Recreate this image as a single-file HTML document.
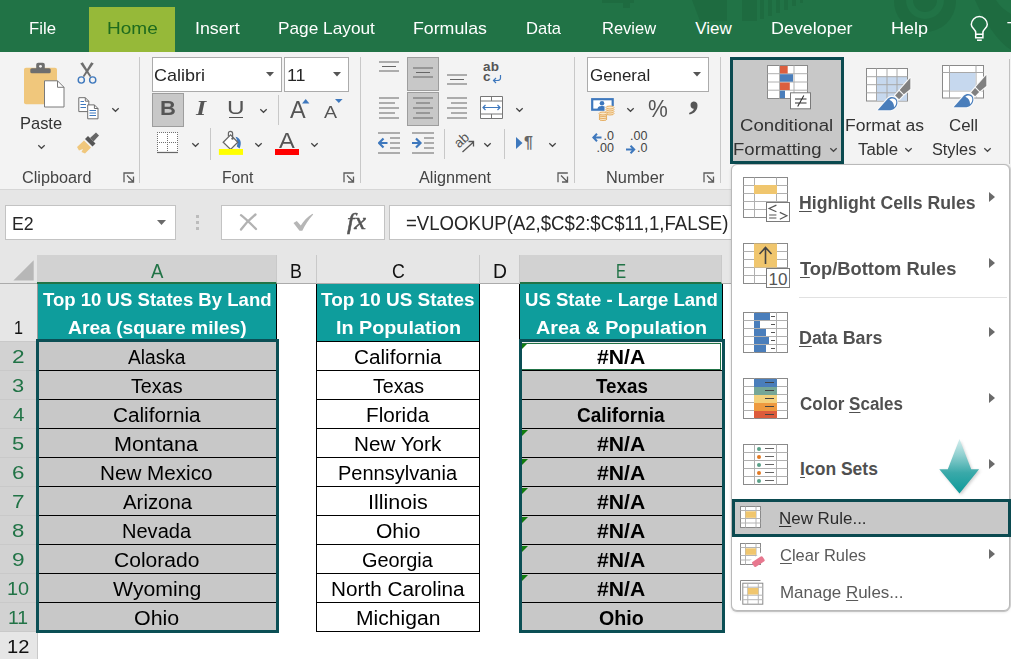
<!DOCTYPE html>
<html>
<head>
<meta charset="utf-8">
<title>Excel</title>
<style>
*{box-sizing:border-box;margin:0;padding:0}
html,body{width:1011px;height:659px;overflow:hidden;background:#fff}
body{font-family:"Liberation Sans",sans-serif;color:#262626;position:relative}
.a{position:absolute}
.t{position:absolute;white-space:nowrap;line-height:1}
.c{text-align:center}
#tabs{left:0;top:0;width:1011px;height:52px;background:#217346;overflow:hidden}
#home{left:89px;top:7px;width:86px;height:45px;background:#96b939}
#ribbon{left:0;top:52px;width:1011px;height:138px;background:#f3f3f3;border-bottom:1px solid #d6d6d6}
.vsep{position:absolute;width:1px;background:#c8c8c8}
.glabel{font-size:15.5px;color:#444}
.box{position:absolute;background:#fff;border:1px solid #ababab}
.selbtn{position:absolute;background:#c8c8c8;border:1px solid #9d9d9d}
#fbar{left:0;top:190px;width:1011px;height:65px;background:#e6e6e6}
#grid{left:0;top:255px;width:732px;height:404px;background:#fff;overflow:hidden}
.ch{position:absolute;top:0;height:29px;border-bottom:1px solid #ababab;background:#e6e6e6;font-size:20px;text-align:center;line-height:29px;color:#262626;border-right:1px solid #c9c9c9}
.ch.sel{background:#d2d2d2;color:#217346;border-bottom:2px solid #217346}
.rh{position:absolute;left:0;width:38px;height:29px;background:#e6e6e6;font-size:20px;text-align:center;line-height:30px;color:#262626;border-bottom:1px solid #c9c9c9;border-right:1px solid #c9c9c9}
.rh.sel{background:#d2d2d2;color:#217346;border-right:1px solid #b5b5b5}
.teal{position:absolute;background:#0e9d9c;color:#fff;font-weight:bold;font-size:18.5px;text-align:center;line-height:29px;white-space:nowrap}
.cell{position:absolute;height:30px;border:1px solid #000;font-size:19px;text-align:center;line-height:29px;white-space:nowrap;color:#000}
.g{background:#c8c8c8}
.b{font-weight:bold}
.selrng{position:absolute;border:3px solid #0b4f55}
.tri{position:absolute;width:0;height:0;border-top:6px solid #107c10;border-right:6px solid transparent}
#menu{left:731px;top:164px;width:279px;height:447px;background:#fff;border:1px solid #b9b9b9;border-radius:6px;box-shadow:0 1px 0 #c4c4c4,1px 0 0 #cfcfcf,0 1px 3px rgba(0,0,0,.15)}
.mi{font-size:17.5px;font-weight:bold;color:#444;left:800px}
.ms{font-size:18px;color:#555;left:780px}
.arr{position:absolute;width:0;height:0;border-left:6.5px solid #6a6a6a;border-top:5.5px solid transparent;border-bottom:5.5px solid transparent}
u{text-decoration-thickness:1px;text-underline-offset:2px}
</style>
</head>
<body>

<div id="tabs" class="a">
  <svg class="a" style="left:590px;top:0" width="421" height="52" viewBox="590 0 421 52"><g fill="#1e6b40">
<path d="M602 0H634V3H630V8H623V3H602Z"/><path d="M692 0H727V21H700Z"/><rect x="742" y="0" width="15" height="21"/>
<path d="M760 0H764V19H760ZM768 0H772V16H768ZM776 0H780V13H776ZM784 0H788V10H784ZM792 0H796V6H792ZM800 0H803V3H800Z"/>
<path d="M894 0A31 31 0 0 0 956 2V0H944A19 19 0 0 1 906 0Z"/><path d="M913 0A12 12 0 0 0 937 0Z"/>
<path d="M975 0C985 22 996 40 1011 50V14C1004 10 999 5 996 0Z"/></g>
<g stroke="#fff" stroke-width="1.5" fill="none"><path d="M975.7 34.3V32.5C975.7 29.5 971.3 28 971.3 24.6A8 8 0 0 1 987.3 24.6C987.3 28 982.9 29.5 982.9 32.5V34.3"/><path d="M975.7 34.3H982.9V37.7H975.7ZM977 40.2H981.8"/></g></svg>
  <div id="home" class="a"></div>
<div class="t" style="left:29.12px;top:20.21px;font-size:17px;color:#fff;transform:scaleX(0.9841);transform-origin:0 0;">File</div>
<div class="t" style="left:106.93px;top:20.21px;font-size:17px;color:#1e6b1e;transform:scaleX(1.1181);transform-origin:0 0;">Home</div>
<div class="t" style="left:194.52px;top:20.21px;font-size:17px;color:#fff;transform:scaleX(1.049);transform-origin:0 0;">Insert</div>
<div class="t" style="left:277.58px;top:20.21px;font-size:17px;color:#fff;transform:scaleX(1.0149);transform-origin:0 0;">Page Layout</div>
<div class="t" style="left:412.54px;top:20.21px;font-size:17px;color:#fff;transform:scaleX(1.0436);transform-origin:0 0;">Formulas</div>
<div class="t" style="left:525.63px;top:20.21px;font-size:17px;color:#fff;transform:scaleX(0.9769);transform-origin:0 0;">Data</div>
<div class="t" style="left:601.64px;top:20.21px;font-size:17px;color:#fff;transform:scaleX(0.9706);transform-origin:0 0;">Review</div>
<div class="t" style="left:695.2px;top:20.21px;font-size:17px;color:#fff;transform:scaleX(1);transform-origin:0 0;">View</div>
<div class="t" style="left:770.53px;top:20.21px;font-size:17px;color:#fff;transform:scaleX(1.0528);transform-origin:0 0;">Developer</div>
<div class="t" style="left:890.52px;top:20.21px;font-size:17px;color:#fff;transform:scaleX(1.0578);transform-origin:0 0;">Help</div>
<div class="t" style="left:1006.58px;top:19.71px;font-size:17px;color:#fff;transform:scaleX(1.0417);transform-origin:0 0;">T</div>
</div>
<div id="ribbon" class="a">
<div class="vsep" style="left:139px;top:5px;height:126px"></div>
<div class="vsep" style="left:360px;top:5px;height:126px"></div>
<div class="vsep" style="left:574px;top:5px;height:126px"></div>
<div class="vsep" style="left:720px;top:5px;height:126px"></div>
<svg class="a" style="left:23px;top:9px" width="44" height="50" viewBox="0 0 44 50">
<rect x="1" y="6.7" width="33" height="36.6" rx="2" fill="#f0c77c"/>
<path d="M13.2 8V3.8A2 2 0 0 1 15.2 1.8H19.8A2 2 0 0 1 21.8 3.8V8Z" fill="#6e6e6e"/><circle cx="17.5" cy="5.3" r="1.4" fill="#f3f3f3"/>
<rect x="7.3" y="7.2" width="20.4" height="5" rx="1.5" fill="#6e6e6e"/>
<path d="M21.5 19.8H34.5L41 26.3V46H21.5Z" fill="#fff" stroke="#7a7a7a"/>
<path d="M34.5 19.8V26.3H41" fill="none" stroke="#7a7a7a"/></svg>
<div class="t" style="left:19.64px;top:63.01px;font-size:17px;color:#333;transform:scaleX(0.9685);transform-origin:0 0;">Paste</div>
<svg class="a" style="left:36.5px;top:92px" width="9" height="6"><path d="M1.3 1.2L4.5 4.3L7.7 1.2" stroke="#444" stroke-width="1.2" fill="none"/></svg>
<svg class="a" style="left:76px;top:9px" width="22" height="24" viewBox="0 0 22 24">
<path d="M4.3 2.5L6.8 1.2L15.3 15.3L13.8 16Z" fill="#6e6e6e"/><path d="M17.7 2.5L15.2 1.2L6.7 15.3L8.2 16Z" fill="#6e6e6e"/>
<circle cx="5.3" cy="19" r="3.1" stroke="#3e78bd" stroke-width="1.4" fill="none"/><circle cx="16.7" cy="19" r="3.1" stroke="#3e78bd" stroke-width="1.4" fill="none"/></svg>
<svg class="a" style="left:77px;top:45px" width="23" height="24" viewBox="0 0 23 24">
<path d="M1.8 0.7H8.3L11.8 4.2V14.6H1.8Z" fill="#fff" stroke="#6e6e6e"/><path d="M8.3 0.7V4.2H11.8" fill="none" stroke="#6e6e6e"/>
<path d="M10.7 7.9H17.4L21 11.5V21.8H10.7Z" fill="#fff" stroke="#6e6e6e"/><path d="M17.4 7.9V11.5H21" fill="none" stroke="#6e6e6e"/>
<path d="M3.5 4.5H7M3.5 7.5H9M3.5 10.5H9M12.5 13.5H19M12.5 16H19M12.5 18.5H19" stroke="#3e78bd" stroke-width="1"/></svg>
<svg class="a" style="left:110.7px;top:54.8px" width="9" height="6"><path d="M1.3 1.2L4.5 4.3L7.7 1.2" stroke="#444" stroke-width="1.2" fill="none"/></svg>
<svg class="a" style="left:76px;top:79px" width="24" height="24" viewBox="0 0 24 24">
<path d="M14 7L20 1.5L23 4.5L17.5 10.5Z" fill="#666"/>
<path d="M9 8L12 5L19.5 12.5L16.5 15.5Z" fill="#555"/>
<path d="M8 9.5L15 16.5L9 22.5L5.5 21L7 18L3 19.5L1 16Z" fill="#f0c77c"/></svg>
<div class="t" style="left:21.58px;top:118.13px;font-size:15.8px;color:#444;transform:scaleX(1.0274);transform-origin:0 0;">Clipboard</div>
<svg class="a" style="left:122.5px;top:119.5px" width="12" height="12"><path d="M1 10.3V1H10.8M4 3.5L10.3 9.8M10.5 4.5V10H5" stroke="#5e5e5e" stroke-width="1.3" fill="none"/></svg>
<div class="box" style="left:152px;top:5px;width:130px;height:35px"></div>
<div class="t" style="left:154.15px;top:15.21px;font-size:17px;color:#262626;transform:scaleX(1.0586);transform-origin:0 0;">Calibri</div>
<svg class="a" style="left:266px;top:20px" width="8" height="5"><path d="M0 0H8L4 4.5Z" fill="#555"/></svg>
<div class="box" style="left:284px;top:5px;width:65px;height:35px"></div>
<div class="t" style="left:287.33px;top:15.21px;font-size:17px;color:#262626;transform:scaleX(1.0516);transform-origin:0 0;">11</div>
<svg class="a" style="left:333px;top:20px" width="8" height="5"><path d="M0 0H8L4 4.5Z" fill="#555"/></svg>
<div class="selbtn" style="left:152px;top:41px;width:32px;height:34px"></div>
<div class="t" style="left:160.17px;top:46.47px;font-size:20px;color:#555;font-weight:bold;transform:scaleX(1.0984);transform-origin:0 0;">B</div>
<div class="t" style="left:195.85px;top:45.81px;font-size:21px;color:#555;font-family:'Liberation Serif',serif;font-weight:bold;font-style:italic;transform:scaleX(1.2444);transform-origin:0 0;">I</div>
<div class="t" style="left:226.76px;top:46.64px;font-size:18.5px;color:#555;transform:scaleX(1.3143);transform-origin:0 0;">U</div>
<div class="a" style="left:228.5px;top:64.8px;width:14px;height:1.4px;background:#555"></div>
<svg class="a" style="left:258.7px;top:56px" width="9" height="6"><path d="M1.3 1.2L4.5 4.3L7.7 1.2" stroke="#444" stroke-width="1.2" fill="none"/></svg>
<div class="vsep" style="left:278px;top:43px;height:30px"></div>
<div class="t" style="left:289.5px;top:47.33px;font-size:23px;color:#555;transform:scaleX(1.0197);transform-origin:0 0;">A</div>
<svg class="a" style="left:301.8px;top:47px" width="8" height="5"><path d="M0 4.5H7.4L3.7 0Z" fill="#3e78bd"/></svg>
<div class="t" style="left:324px;top:52.41px;font-size:17px;color:#555;transform:scaleX(1.1504);transform-origin:0 0;">A</div>
<svg class="a" style="left:335.4px;top:47px" width="8" height="5"><path d="M0 0H7.6L3.8 4Z" fill="#3e78bd"/></svg>
<svg class="a" style="left:157px;top:80px" width="22" height="22" viewBox="0 0 22 22">
<rect x="0.5" y="0.5" width="20.5" height="19" fill="#fff"/>
<path d="M0 0.5H21M0 10.5H21" stroke="#707070" stroke-width="1" stroke-dasharray="1 1" fill="none"/>
<path d="M0.5 0V20M10.5 0V20M20.5 0V20" stroke="#707070" stroke-width="1" stroke-dasharray="1 1" fill="none"/>
<path d="M0 20.5H21" stroke="#666" stroke-width="1.2"/></svg>
<svg class="a" style="left:190.5px;top:89.5px" width="9" height="6"><path d="M1.3 1.2L4.5 4.3L7.7 1.2" stroke="#444" stroke-width="1.2" fill="none"/></svg>
<div class="vsep" style="left:210px;top:76px;height:32px"></div>
<svg class="a" style="left:218px;top:78px" width="26" height="26" viewBox="0 0 26 26">
<path d="M17.5 6.8C22.5 8 24.2 12.5 21.6 18.6L18.8 16.5C20 13 19.5 10 17.5 6.8Z" fill="#3e78bd"/>
<path d="M12.6 4.9L19.8 12.3L12.6 19.4L5.2 12.3Z" fill="#fff" stroke="#666" stroke-width="1.3"/>
<path d="M10.4 6.5V3.4A2.1 2.1 0 0 1 14.6 3.4V8.4" stroke="#666" stroke-width="1.2" fill="none"/><circle cx="14.5" cy="8.6" r="1.2" fill="#666"/>
<rect x="0.9" y="19" width="24.1" height="5.9" fill="#ff0"/></svg>
<svg class="a" style="left:253.5px;top:89.5px" width="9" height="6"><path d="M1.3 1.2L4.5 4.3L7.7 1.2" stroke="#444" stroke-width="1.2" fill="none"/></svg>
<div class="t" style="left:278.99px;top:78.6px;font-size:21.5px;color:#555;transform:scaleX(1.0986);transform-origin:0 0;">A</div>
<div class="a" style="left:275px;top:97.30000000000001px;width:24px;height:5.5px;background:#f00"></div>
<svg class="a" style="left:309.5px;top:89.5px" width="9" height="6"><path d="M1.3 1.2L4.5 4.3L7.7 1.2" stroke="#444" stroke-width="1.2" fill="none"/></svg>
<div class="t" style="left:221.51px;top:118.03px;font-size:15.8px;color:#444;transform:scaleX(0.9934);transform-origin:0 0;">Font</div>
<svg class="a" style="left:343.2px;top:119.5px" width="12" height="12"><path d="M1 10.3V1H10.8M4 3.5L10.3 9.8M10.5 4.5V10H5" stroke="#5e5e5e" stroke-width="1.3" fill="none"/></svg>
<div class="selbtn" style="left:407px;top:5px;width:32px;height:34px"></div>
<div class="selbtn" style="left:407px;top:40px;width:32px;height:34px"></div>
<svg class="a" style="left:379px;top:9px" width="20" height="11"><path d="M0 1H20 M3 5.5H17 M0 10H20" stroke="#666" stroke-width="1.2" fill="none"/></svg>
<svg class="a" style="left:413px;top:15px" width="20" height="11"><path d="M0 1H20 M3 5.5H17 M0 10H20" stroke="#666" stroke-width="1.2" fill="none"/></svg>
<svg class="a" style="left:447px;top:21.5px" width="20" height="11"><path d="M0 1H20 M3 5.5H17 M0 10H20" stroke="#666" stroke-width="1.2" fill="none"/></svg>
<div class="t" style="left:483px;top:10px;font-size:13.5px;font-weight:bold;color:#555;line-height:10px;letter-spacing:0.2px">ab<br>c</div>
<svg class="a" style="left:492px;top:22px" width="10" height="10"><path d="M8.5 1V4C8.5 6 7 6.5 5 6.5H1.5M4 4L1.5 6.5L4 9" stroke="#3e78bd" stroke-width="1.2" fill="none"/></svg>
<svg class="a" style="left:379px;top:44.5px" width="20" height="22"><path d="M0 1H20 M0 6H16 M0 11H20 M0 16H16 M0 21H20" stroke="#666" stroke-width="1.2" fill="none"/></svg>
<svg class="a" style="left:413px;top:44.5px" width="20" height="22"><path d="M0 1H20 M3 6H17 M0 11H20 M3 16H17 M0 21H20" stroke="#666" stroke-width="1.2" fill="none"/></svg>
<svg class="a" style="left:447px;top:44.5px" width="20" height="22"><path d="M0 1H20 M4 6H20 M0 11H20 M4 16H20 M0 21H20" stroke="#666" stroke-width="1.2" fill="none"/></svg>
<svg class="a" style="left:480px;top:44px" width="24" height="24" viewBox="0 0 24 24">
<path d="M0.5 0.5H22.5V22.5H0.5ZM0.5 5H22.5M0.5 18H22.5M11.5 0.5V5M11.5 18V22.5" stroke="#777" fill="#fff"/>
<path d="M3 11.5H20M5.5 9L3 11.5L5.5 14M17.5 9L20 11.5L17.5 14" stroke="#3e78bd" stroke-width="1.2" fill="none"/></svg>
<svg class="a" style="left:515px;top:55px" width="9" height="6"><path d="M1.3 1.2L4.5 4.3L7.7 1.2" stroke="#444" stroke-width="1.2" fill="none"/></svg>
<svg class="a" style="left:378px;top:79.5px" width="24" height="24" viewBox="0 0 24 24"><path d="M0 1H22M12 6H22M12 11H22M12 16H22M0 21H22" stroke="#666" stroke-width="1.2"/>
<path d="M9.5 11H1.5M5.5 6.5L1 11L5.5 15.5" stroke="#3e78bd" stroke-width="2.2" fill="none"/></svg>
<svg class="a" style="left:412px;top:79.5px" width="24" height="24" viewBox="0 0 24 24"><path d="M0 1H22M12 6H22M12 11H22M12 16H22M0 21H22" stroke="#666" stroke-width="1.2"/>
<path d="M0 11H8M4 6.5L8.5 11L4 15.5" stroke="#3e78bd" stroke-width="2.2" fill="none"/></svg>
<div class="vsep" style="left:444px;top:77px;height:30px"></div>
<svg class="a" style="left:451px;top:78px" width="28" height="28" viewBox="0 0 28 28">
<text x="0" y="0" font-family="Liberation Sans" font-size="13.5" fill="#555" text-anchor="middle" transform="translate(13.5,13.5) rotate(-42)">ab</text>
<path d="M11.5 22L22.5 12M17.5 11.5H22.5V16.5" stroke="#555" stroke-width="1.3" fill="none"/></svg>
<svg class="a" style="left:483px;top:90px" width="9" height="6"><path d="M1.3 1.2L4.5 4.3L7.7 1.2" stroke="#444" stroke-width="1.2" fill="none"/></svg>
<div class="vsep" style="left:504px;top:77px;height:30px"></div>
<svg class="a" style="left:516px;top:85px" width="7" height="12"><path d="M0 0L6.5 6L0 12Z" fill="#3e78bd"/></svg>
<div class="t" style="left:524px;top:83px;font-size:16px;font-weight:bold;color:#666">&para;</div>
<svg class="a" style="left:548px;top:90px" width="9" height="6"><path d="M1.3 1.2L4.5 4.3L7.7 1.2" stroke="#444" stroke-width="1.2" fill="none"/></svg>
<div class="t" style="left:419.1px;top:118.03px;font-size:15.8px;color:#444;transform:scaleX(1.0256);transform-origin:0 0;">Alignment</div>
<svg class="a" style="left:557px;top:119.5px" width="12" height="12"><path d="M1 10.3V1H10.8M4 3.5L10.3 9.8M10.5 4.5V10H5" stroke="#5e5e5e" stroke-width="1.3" fill="none"/></svg>
<div class="box" style="left:587px;top:5px;width:122px;height:35px"></div>
<div class="t" style="left:589.6px;top:15.11px;font-size:17px;color:#262626;transform:scaleX(0.9949);transform-origin:0 0;">General</div>
<svg class="a" style="left:693px;top:20px" width="8" height="5"><path d="M0 0H8L4 4.5Z" fill="#555"/></svg>
<svg class="a" style="left:590px;top:45px" width="26" height="26" viewBox="0 0 26 26">
<rect x="2.2" y="2.2" width="20.5" height="10.5" fill="#fff" stroke="#3e78bd" stroke-width="2.2"/>
<circle cx="12" cy="6.2" r="2.3" fill="#3e78bd"/>
<path d="M7.5 12.5C7.5 9.5 9.5 9 12 9C14.5 9 16.5 9.5 16.5 12.5Z" fill="#3e78bd"/>
<rect x="14.5" y="9" width="10.5" height="9" fill="#f3f3f3"/><rect x="8" y="15" width="10" height="9" fill="#f3f3f3"/>
<ellipse cx="20" cy="16.5" rx="4" ry="1.5" fill="#fbe9cc" stroke="#e5ae62" stroke-width="1"/><ellipse cx="20" cy="14.5" rx="4" ry="1.5" fill="#fbe9cc" stroke="#e5ae62" stroke-width="1"/><ellipse cx="20" cy="12.5" rx="4" ry="1.5" fill="#fbe9cc" stroke="#e5ae62" stroke-width="1"/><ellipse cx="20" cy="10.5" rx="4" ry="1.5" fill="#fbe9cc" stroke="#e5ae62" stroke-width="1"/>
<ellipse cx="13" cy="22" rx="4" ry="1.5" fill="#fbe9cc" stroke="#e5ae62" stroke-width="1"/><ellipse cx="13" cy="20" rx="4" ry="1.5" fill="#fbe9cc" stroke="#e5ae62" stroke-width="1"/><ellipse cx="13" cy="18" rx="4" ry="1.5" fill="#fbe9cc" stroke="#e5ae62" stroke-width="1"/><ellipse cx="13" cy="16.5" rx="4" ry="1.5" fill="#fbe9cc" stroke="#e5ae62" stroke-width="1"/></svg>
<svg class="a" style="left:626px;top:55px" width="9" height="6"><path d="M1.3 1.2L4.5 4.3L7.7 1.2" stroke="#444" stroke-width="1.2" fill="none"/></svg>
<div class="t" style="left:648px;top:45px;font-size:24px;color:#555;transform:scaleX(.93);transform-origin:0 0">%</div>
<svg class="a" style="left:687px;top:48px" width="13" height="17"><path d="M6.5 1.5A3.8 3.8 0 0 1 10.5 5.5C10.5 10 7.5 13.5 2.5 14.5L2 13C5 12 6.5 10.5 6.8 8.8A3.7 3.7 0 0 1 6.5 1.5Z" fill="#555"/></svg>
<div class="t" style="left:603px;top:79px;font-size:12.5px;color:#444;line-height:11.5px;text-align:right;width:11px;direction:rtl"><span style="direction:ltr;unicode-bidi:bidi-override">.0</span><br><span style="direction:ltr;unicode-bidi:bidi-override">.00</span></div>
<svg class="a" style="left:592px;top:81px" width="10" height="9"><path d="M9.5 4.5H1.5M5 0.8L1.3 4.5L5 8.2" stroke="#3e78bd" stroke-width="2" fill="none"/></svg>
<div class="t" style="left:629px;top:79px;font-size:12.5px;color:#444;line-height:11.5px;text-align:right;width:18.5px;direction:rtl"><span style="direction:ltr;unicode-bidi:bidi-override">.00</span><br><span style="direction:ltr;unicode-bidi:bidi-override">.0</span></div>
<svg class="a" style="left:626px;top:92.5px" width="10" height="9"><path d="M0 4.5H8M4.5 0.8L8.2 4.5L4.5 8.2" stroke="#3e78bd" stroke-width="2" fill="none"/></svg>
<div class="t" style="left:605.65px;top:118.03px;font-size:15.8px;color:#444;transform:scaleX(1.0366);transform-origin:0 0;">Number</div>
<svg class="a" style="left:703px;top:119.5px" width="12" height="12"><path d="M1 10.3V1H10.8M4 3.5L10.3 9.8M10.5 4.5V10H5" stroke="#5e5e5e" stroke-width="1.3" fill="none"/></svg>
<div class="a" style="left:730px;top:5px;width:114px;height:107px;background:#c8c8c8;border:3px solid #0b4a50"></div>
<svg class="a" style="left:767px;top:12.5px" width="46" height="46" viewBox="0 0 46 46">
<rect x="0.5" y="0.5" width="40" height="33" fill="#fff" stroke="#8a8a8a"/>
<path d="M12.5 0.5V33.5M27 0.5V33.5M0.5 8.7H40.5M0.5 17H40.5M0.5 25.2H40.5" stroke="#b0b0b0" fill="none"/>
<rect x="13" y="1" width="7.7" height="7.5" fill="#dc5f3f"/><rect x="13" y="9.2" width="13" height="7.5" fill="#4a7ebb"/><rect x="13" y="17.5" width="9.8" height="7.5" fill="#dc5f3f"/><rect x="13" y="25.7" width="5" height="7.5" fill="#4a7ebb"/>
<rect x="23.5" y="27.8" width="20" height="16" fill="#fff" stroke="#7a7a7a"/>
<path d="M28 34H39.5M28 38H39.5M36.8 30.5L30.7 41.5" stroke="#333" stroke-width="1.1" fill="none"/></svg>
<div class="t" style="left:740.03px;top:64.96px;font-size:17.3px;color:#333;transform:scaleX(1.0769);transform-origin:0 0;">Conditional</div>
<div class="t" style="left:733.3px;top:89.16px;font-size:17.3px;color:#333;transform:scaleX(1.0723);transform-origin:0 0;">Formatting</div>
<svg class="a" style="left:828.5px;top:94.5px" width="9" height="6"><path d="M1.3 1.2L4.5 4.3L7.7 1.2" stroke="#444" stroke-width="1.2" fill="none"/></svg>
<svg class="a" style="left:865.5px;top:15.5px" width="48" height="46" viewBox="0 0 48 46">
<rect x="0.5" y="0.5" width="41" height="32.5" fill="#fff" stroke="#8a8a8a"/>
<rect x="10.5" y="8.7" width="30.5" height="24" fill="#c6d8ee"/>
<path d="M10.5 0.5V33M21 0.5V33M31 0.5V33M0.5 8.7H41.5M0.5 16.7H41.5M0.5 24.8H41.5" stroke="#a8a8a8" fill="none"/>
<g stroke="#fafafa" stroke-width="2.2" stroke-linejoin="round"><path d="M44.3 10V20.9L37.9 26.3L33.7 22.1Z"/><path d="M33.1 23.1L37.1 26.9L33.1 31.3L29.1 27.6Z"/><path d="M11.6 42.2L22 30.5C24.5 28 29.5 28.5 31 32C32.5 36.5 29.5 41.5 24.5 42.2Z"/></g>
<path d="M44.3 10V20.9L37.9 26.3L33.7 22.1Z" fill="#808080"/>
<path d="M33.1 23.1L37.1 26.9L33.1 31.3L29.1 27.6Z" fill="#808080"/>
<path d="M11.6 42.2L22 30.5C24.5 28 29.5 28.5 31 32C32.5 36.5 29.5 41.5 24.5 42.2Z" fill="#4a7ebb"/>
<path d="M23.3 31.8C25.5 29.6 29.6 30 30.2 33.3C30.6 35.8 29.6 38 28 39.3C28.3 36 26.6 33.3 23.3 31.8Z" fill="#fff"/></svg>
<div class="t" style="left:845.38px;top:65.06px;font-size:17.3px;color:#333;transform:scaleX(1.0158);transform-origin:0 0;">Format as</div>
<div class="t" style="left:857.51px;top:89.16px;font-size:17.3px;color:#333;transform:scaleX(0.9726);transform-origin:0 0;">Table</div>
<svg class="a" style="left:903.7px;top:94.5px" width="9" height="6"><path d="M1.3 1.2L4.5 4.3L7.7 1.2" stroke="#444" stroke-width="1.2" fill="none"/></svg>
<svg class="a" style="left:941.7px;top:12.5px" width="48" height="46" viewBox="0 0 48 46">
<rect x="0.5" y="0.5" width="41" height="32.5" fill="#fff" stroke="#8a8a8a"/>
<path d="M7.5 0.5V33M34 0.5V33M0.5 7.5H41.5M0.5 26H41.5" stroke="#a8a8a8" fill="none"/>
<rect x="8" y="8" width="25.5" height="17.5" fill="#c6d8ee"/>
<g stroke="#fafafa" stroke-width="2.2" stroke-linejoin="round"><path d="M44.3 10V20.9L37.9 26.3L33.7 22.1Z"/><path d="M33.1 23.1L37.1 26.9L33.1 31.3L29.1 27.6Z"/><path d="M11.6 42.2L22 30.5C24.5 28 29.5 28.5 31 32C32.5 36.5 29.5 41.5 24.5 42.2Z"/></g>
<path d="M44.3 10V20.9L37.9 26.3L33.7 22.1Z" fill="#808080"/>
<path d="M33.1 23.1L37.1 26.9L33.1 31.3L29.1 27.6Z" fill="#808080"/>
<path d="M11.6 42.2L22 30.5C24.5 28 29.5 28.5 31 32C32.5 36.5 29.5 41.5 24.5 42.2Z" fill="#4a7ebb"/>
<path d="M23.3 31.8C25.5 29.6 29.6 30 30.2 33.3C30.6 35.8 29.6 38 28 39.3C28.3 36 26.6 33.3 23.3 31.8Z" fill="#fff"/></svg>
<div class="t" style="left:948.52px;top:65.06px;font-size:17.3px;color:#333;transform:scaleX(0.9784);transform-origin:0 0;">Cell</div>
<div class="t" style="left:931.95px;top:89.16px;font-size:17.3px;color:#333;transform:scaleX(0.9409);transform-origin:0 0;">Styles</div>
<svg class="a" style="left:983.3px;top:94.5px" width="9" height="6"><path d="M1.3 1.2L4.5 4.3L7.7 1.2" stroke="#444" stroke-width="1.2" fill="none"/></svg>
<div class="vsep" style="left:1009px;top:7px;height:105px;background:#c0c0c0"></div>
</div>
<div id="fbar" class="a">
<div class="box" style="left:5px;top:15px;width:171px;height:35px;border-color:#c3c3c3"></div>
<div class="t" style="left:12.3px;top:23.82px;font-size:19px;color:#262626;transform:scaleX(0.9327);transform-origin:0 0;">E2</div>
<svg class="a" style="left:156.5px;top:30px" width="10" height="6"><path d="M0 0H9L4.5 5Z" fill="#6a6a6a"/></svg>
<div class="a" style="left:196px;top:25px;width:3px;height:3px;background:#bcbcbc"></div>
<div class="a" style="left:196px;top:31px;width:3px;height:3px;background:#bcbcbc"></div>
<div class="a" style="left:196px;top:37px;width:3px;height:3px;background:#bcbcbc"></div>
<div class="box" style="left:221px;top:15px;width:164px;height:35px;border-color:#c3c3c3"></div>
<svg class="a" style="left:239px;top:23px" width="20" height="18"><path d="M2 2.2C7 6 12 11 17 16M16.5 1.5C11 6 6 11 2 16.5" stroke="#b2b2b2" stroke-width="2.3" stroke-linecap="round" fill="none"/></svg>
<svg class="a" style="left:292px;top:23px" width="23" height="19"><path d="M1.5 10L4.8 8L8.8 12.5C11.5 8 15.5 3.8 20.5 0.8L21.2 1.6C16.8 6.5 13 12 10.3 17.8H7.5Z" fill="#b6b6b6"/></svg>
<div class="t" style="left:346.77px;top:19.2px;font-size:24px;color:#555;font-family:'Liberation Serif',serif;font-style:italic;transform:scaleX(1.1006);transform-origin:0 0;-webkit-text-stroke:0.5px #555;">fx</div>
<div class="box" style="left:389px;top:15px;width:346px;height:35px;border-color:#c3c3c3"></div>
<div class="t" style="left:405.64px;top:23.69px;font-size:19.5px;color:#262626;transform:scaleX(0.953);transform-origin:0 0;">=VLOOKUP(A2,$C$2:$C$11,1,FALSE)</div>
</div>
<div id="grid" class="a">
<div class="ch" style="left:0;width:37px;border-right:none"></div>
<svg class="a" style="left:13px;top:4.6px" width="21" height="21"><path d="M20.7 0.3V20.6H0.4Z" fill="#b7b7b7"/></svg>
<div class="ch sel" style="left:37px;width:240px"></div>
<div class="t" style="left:151.3px;top:6.69px;font-size:19.5px;color:#217346;transform:scaleX(0.9538);transform-origin:0 0;">A</div>
<div class="ch" style="left:277px;width:40px"></div>
<div class="t" style="left:290.29px;top:6.69px;font-size:19.5px;color:#111;transform:scaleX(0.9135);transform-origin:0 0;">B</div>
<div class="ch" style="left:317px;width:163px"></div>
<div class="t" style="left:391.69px;top:6.69px;font-size:19.5px;color:#111;transform:scaleX(0.9106);transform-origin:0 0;">C</div>
<div class="ch" style="left:480px;width:40px"></div>
<div class="t" style="left:492.66px;top:6.69px;font-size:19.5px;color:#111;transform:scaleX(0.9914);transform-origin:0 0;">D</div>
<div class="ch sel" style="left:520px;width:202px"></div>
<div class="t" style="left:615.66px;top:6.69px;font-size:19.5px;color:#217346;transform:scaleX(0.7736);transform-origin:0 0;">E</div>
<div class="ch" style="left:722px;width:10px;border-right:none"></div>
<div class="rh" style="top:29px;height:58px"></div>
<div class="t" style="left:13.78px;top:63.64px;font-size:18.5px;color:#111;transform:scaleX(0.875);transform-origin:0 0;">1</div>
<div class="rh sel" style="top:87px"></div>
<div class="t" style="left:12.2px;top:93.44px;font-size:18.5px;color:#217346;transform:scaleX(1.2235);transform-origin:0 0;">2</div>
<div class="rh sel" style="top:116px"></div>
<div class="t" style="left:12.47px;top:122.44px;font-size:18.5px;color:#217346;transform:scaleX(1.1818);transform-origin:0 0;">3</div>
<div class="rh sel" style="top:145px"></div>
<div class="t" style="left:12.86px;top:151.44px;font-size:18.5px;color:#217346;transform:scaleX(1.1064);transform-origin:0 0;">4</div>
<div class="rh sel" style="top:174px"></div>
<div class="t" style="left:12.47px;top:180.44px;font-size:18.5px;color:#217346;transform:scaleX(1.1818);transform-origin:0 0;">5</div>
<div class="rh sel" style="top:203px"></div>
<div class="t" style="left:12.21px;top:209.44px;font-size:18.5px;color:#217346;transform:scaleX(1.2093);transform-origin:0 0;">6</div>
<div class="rh sel" style="top:232px"></div>
<div class="t" style="left:12.2px;top:238.44px;font-size:18.5px;color:#217346;transform:scaleX(1.2235);transform-origin:0 0;">7</div>
<div class="rh sel" style="top:261px"></div>
<div class="t" style="left:12.34px;top:267.44px;font-size:18.5px;color:#217346;transform:scaleX(1.1954);transform-origin:0 0;">8</div>
<div class="rh sel" style="top:290px"></div>
<div class="t" style="left:12.2px;top:296.44px;font-size:18.5px;color:#217346;transform:scaleX(1.2235);transform-origin:0 0;">9</div>
<div class="rh sel" style="top:319px"></div>
<div class="t" style="left:7.04px;top:325.44px;font-size:18.5px;color:#217346;transform:scaleX(1.0757);transform-origin:0 0;">10</div>
<div class="rh sel" style="top:348px"></div>
<div class="t" style="left:8.18px;top:354.44px;font-size:18.5px;color:#217346;transform:scaleX(1.0473);transform-origin:0 0;">11</div>
<div class="rh" style="top:377px;border-bottom:none"></div>
<div class="t" style="left:7.13px;top:383.44px;font-size:18.5px;color:#111;transform:scaleX(1.0874);transform-origin:0 0;">12</div>
<div class="teal" style="left:37px;top:29px;width:240px;height:57px;border-left:1px solid #9a9a9a;border-right:1px solid #000"></div>
<div class="teal" style="left:316px;top:29px;width:164px;height:58px;border:1px solid #000;border-top:none"></div>
<div class="teal" style="left:519px;top:29px;width:204px;height:57px;border-left:1px solid #000;border-right:1px solid #000"></div>
<div class="t" style="left:43px;top:35.64px;font-size:18.5px;color:#fff;font-weight:bold;transform:scaleX(1.0031);transform-origin:0 0;">Top 10 US States By Land</div>
<div class="t" style="left:68.08px;top:63.64px;font-size:18.5px;color:#fff;font-weight:bold;transform:scaleX(1.0405);transform-origin:0 0;">Area (square miles)</div>
<div class="t" style="left:321.2px;top:35.64px;font-size:18.5px;color:#fff;font-weight:bold;transform:scaleX(1.0249);transform-origin:0 0;">Top 10 US States</div>
<div class="t" style="left:335.62px;top:63.74px;font-size:18.5px;color:#fff;font-weight:bold;transform:scaleX(1.0679);transform-origin:0 0;">In Population</div>
<div class="t" style="left:524.7px;top:35.64px;font-size:18.5px;color:#fff;font-weight:bold;transform:scaleX(1.0026);transform-origin:0 0;">US State - Large Land</div>
<div class="t" style="left:535.87px;top:63.64px;font-size:18.5px;color:#fff;font-weight:bold;transform:scaleX(1.0674);transform-origin:0 0;">Area &amp; Population</div>
<div class="cell g" style="left:37px;top:86px;width:240px"></div>
<div class="t" style="left:128.3px;top:92.59px;font-size:19.5px;color:#000;transform:scaleX(0.9829);transform-origin:0 0;">Alaska</div>
<div class="cell" style="left:316px;top:86px;width:164px"></div>
<div class="t" style="left:353.89px;top:92.59px;font-size:19.5px;color:#000;transform:scaleX(1.0627);transform-origin:0 0;">California</div>
<div class="cell" style="left:520px;top:86px;width:203px"></div>
<div class="t" style="left:597.32px;top:92.59px;font-size:19.5px;color:#000;font-weight:bold;transform:scaleX(1.0849);transform-origin:0 0;">#N/A</div>
<div class="tri" style="left:522px;top:88px"></div>
<div class="cell g" style="left:37px;top:115px;width:240px"></div>
<div class="t" style="left:131.45px;top:121.59px;font-size:19.5px;color:#000;transform:scaleX(1.012);transform-origin:0 0;">Texas</div>
<div class="cell" style="left:316px;top:115px;width:164px"></div>
<div class="t" style="left:372.75px;top:121.59px;font-size:19.5px;color:#000;transform:scaleX(1.004);transform-origin:0 0;">Texas</div>
<div class="cell g" style="left:520px;top:115px;width:203px"></div>
<div class="t" style="left:595.61px;top:121.59px;font-size:19.5px;color:#000;font-weight:bold;transform:scaleX(0.9641);transform-origin:0 0;">Texas</div>
<div class="cell g" style="left:37px;top:144px;width:240px"></div>
<div class="t" style="left:112.79px;top:150.59px;font-size:19.5px;color:#000;transform:scaleX(1.0627);transform-origin:0 0;">California</div>
<div class="cell" style="left:316px;top:144px;width:164px"></div>
<div class="t" style="left:365.7px;top:150.59px;font-size:19.5px;color:#000;transform:scaleX(1.0602);transform-origin:0 0;">Florida</div>
<div class="cell g" style="left:520px;top:144px;width:203px"></div>
<div class="t" style="left:577.02px;top:150.59px;font-size:19.5px;color:#000;font-weight:bold;transform:scaleX(0.9742);transform-origin:0 0;">California</div>
<div class="cell g" style="left:37px;top:173px;width:240px"></div>
<div class="t" style="left:114.18px;top:179.59px;font-size:19.5px;color:#000;transform:scaleX(1.1077);transform-origin:0 0;">Montana</div>
<div class="cell" style="left:316px;top:173px;width:164px"></div>
<div class="t" style="left:353.7px;top:179.59px;font-size:19.5px;color:#000;transform:scaleX(1.0594);transform-origin:0 0;">New York</div>
<div class="cell g" style="left:520px;top:173px;width:203px"></div>
<div class="t" style="left:597.32px;top:179.59px;font-size:19.5px;color:#000;font-weight:bold;transform:scaleX(1.0849);transform-origin:0 0;">#N/A</div>
<div class="tri" style="left:522px;top:175px"></div>
<div class="cell g" style="left:37px;top:202px;width:240px"></div>
<div class="t" style="left:100.4px;top:208.59px;font-size:19.5px;color:#000;transform:scaleX(1.0597);transform-origin:0 0;">New Mexico</div>
<div class="cell" style="left:316px;top:202px;width:164px"></div>
<div class="t" style="left:337.86px;top:208.59px;font-size:19.5px;color:#000;transform:scaleX(1.0262);transform-origin:0 0;">Pennsylvania</div>
<div class="cell g" style="left:520px;top:202px;width:203px"></div>
<div class="t" style="left:597.32px;top:208.59px;font-size:19.5px;color:#000;font-weight:bold;transform:scaleX(1.0849);transform-origin:0 0;">#N/A</div>
<div class="tri" style="left:522px;top:204px"></div>
<div class="cell g" style="left:37px;top:231px;width:240px"></div>
<div class="t" style="left:122.5px;top:237.59px;font-size:19.5px;color:#000;transform:scaleX(1.0453);transform-origin:0 0;">Arizona</div>
<div class="cell" style="left:316px;top:231px;width:164px"></div>
<div class="t" style="left:367.72px;top:237.59px;font-size:19.5px;color:#000;transform:scaleX(1.1025);transform-origin:0 0;">Illinois</div>
<div class="cell g" style="left:520px;top:231px;width:203px"></div>
<div class="t" style="left:597.32px;top:237.59px;font-size:19.5px;color:#000;font-weight:bold;transform:scaleX(1.0849);transform-origin:0 0;">#N/A</div>
<div class="tri" style="left:522px;top:233px"></div>
<div class="cell g" style="left:37px;top:260px;width:240px"></div>
<div class="t" style="left:121.71px;top:266.59px;font-size:19.5px;color:#000;transform:scaleX(1.0274);transform-origin:0 0;">Nevada</div>
<div class="cell" style="left:316px;top:260px;width:164px"></div>
<div class="t" style="left:375.98px;top:266.59px;font-size:19.5px;color:#000;transform:scaleX(1.0787);transform-origin:0 0;">Ohio</div>
<div class="cell g" style="left:520px;top:260px;width:203px"></div>
<div class="t" style="left:597.32px;top:266.59px;font-size:19.5px;color:#000;font-weight:bold;transform:scaleX(1.0849);transform-origin:0 0;">#N/A</div>
<div class="tri" style="left:522px;top:262px"></div>
<div class="cell g" style="left:37px;top:289px;width:240px"></div>
<div class="t" style="left:114.32px;top:295.59px;font-size:19.5px;color:#000;transform:scaleX(1.0789);transform-origin:0 0;">Colorado</div>
<div class="cell" style="left:316px;top:289px;width:164px"></div>
<div class="t" style="left:362.28px;top:295.59px;font-size:19.5px;color:#000;transform:scaleX(1.0205);transform-origin:0 0;">Georgia</div>
<div class="cell g" style="left:520px;top:289px;width:203px"></div>
<div class="t" style="left:597.32px;top:295.59px;font-size:19.5px;color:#000;font-weight:bold;transform:scaleX(1.0849);transform-origin:0 0;">#N/A</div>
<div class="tri" style="left:522px;top:291px"></div>
<div class="cell g" style="left:37px;top:318px;width:240px"></div>
<div class="t" style="left:113.49px;top:324.59px;font-size:19.5px;color:#000;transform:scaleX(1.0902);transform-origin:0 0;">Wyoming</div>
<div class="cell" style="left:316px;top:318px;width:164px"></div>
<div class="t" style="left:330.5px;top:324.59px;font-size:19.5px;color:#000;transform:scaleX(1.0628);transform-origin:0 0;">North Carolina</div>
<div class="cell g" style="left:520px;top:318px;width:203px"></div>
<div class="t" style="left:597.32px;top:324.59px;font-size:19.5px;color:#000;font-weight:bold;transform:scaleX(1.0849);transform-origin:0 0;">#N/A</div>
<div class="tri" style="left:522px;top:320px"></div>
<div class="cell g" style="left:37px;top:347px;width:240px"></div>
<div class="t" style="left:134.46px;top:353.59px;font-size:19.5px;color:#000;transform:scaleX(1.099);transform-origin:0 0;">Ohio</div>
<div class="cell" style="left:316px;top:347px;width:164px"></div>
<div class="t" style="left:355.82px;top:353.59px;font-size:19.5px;color:#000;transform:scaleX(1.0811);transform-origin:0 0;">Michigan</div>
<div class="cell g" style="left:520px;top:347px;width:203px"></div>
<div class="t" style="left:598.89px;top:353.59px;font-size:19.5px;color:#000;font-weight:bold;transform:scaleX(1.007);transform-origin:0 0;">Ohio</div>
<div class="selrng" style="left:36px;top:84px;width:243px;height:294px"></div>
<div class="selrng" style="left:519px;top:84px;width:206px;height:294px"></div>
<div class="a" style="left:522px;top:87px;width:200px;height:1px;background:#ececec"></div>
<div class="a" style="left:522px;top:88px;width:199px;height:27px;border:1px solid #217346;border-left:none"></div>
</div>
<div id="menu" class="a"></div>
<div id="menuitems" class="a" style="left:0;top:0">
<svg class="a" style="left:743px;top:177px" width="48" height="46" viewBox="0 0 48 46">
<rect x="0.5" y="0.5" width="44" height="40" fill="#fff" stroke="#8a8a8a"/>
<path d="M11.5 0.5V40.5M33.5 0.5V40.5M0.5 8.5H44.5M0.5 16.5H44.5M0.5 24.5H44.5M0.5 32.5H44.5" stroke="#b0b0b0" fill="none"/>
<rect x="11" y="8" width="23" height="9" fill="#f0c66e"/>
<rect x="23.5" y="25.5" width="23" height="19" fill="#fff" stroke="#7a7a7a"/>
<path d="M33.4 28.1L26.1 31.5L33.4 34.8M26.1 38H33.4M26.1 41H33.4M36.8 35.4L43.9 38.8L36.8 42.3" stroke="#555" stroke-width="1.2" fill="none"/></svg>
<div class="t" style="left:799.49px;top:195.09px;font-size:17.5px;color:#505050;font-weight:bold;transform:scaleX(1.0087);transform-origin:0 0;"><u>H</u>ighlight Cells Rules</div>
<div class="arr" style="left:989px;top:192.2px"></div>
<svg class="a" style="left:743px;top:243px" width="48" height="46" viewBox="0 0 48 46">
<rect x="0.5" y="0.5" width="44" height="40" fill="#fff" stroke="#8a8a8a"/>
<path d="M11.5 0.5V40.5M33.5 0.5V40.5M0.5 8.5H44.5M0.5 16.5H44.5M0.5 24.5H44.5M0.5 32.5H44.5" stroke="#b0b0b0" fill="none"/>
<rect x="11" y="0.5" width="23" height="24" fill="#f0c66e"/>
<path d="M22.5 21V5M16.5 11L22.5 4.5L28.5 11" stroke="#444" stroke-width="1.6" fill="none"/>
<rect x="23.5" y="25.5" width="23" height="19" fill="#fff" stroke="#7a7a7a"/>
<text x="35" y="42" font-family="Liberation Sans" font-size="17" fill="#555" text-anchor="middle" textLength="19" lengthAdjust="spacingAndGlyphs">10</text></svg>
<div class="t" style="left:800.49px;top:260.89px;font-size:17.5px;color:#505050;font-weight:bold;transform:scaleX(1.0465);transform-origin:0 0;"><u>T</u>op/Bottom Rules</div>
<div class="arr" style="left:989px;top:258.3px"></div>
<div class="a" style="left:799px;top:297px;width:208px;height:1px;background:#e1e1e1"></div>
<svg class="a" style="left:743px;top:312px" width="48" height="46" viewBox="0 0 48 46">
<rect x="0.5" y="0.5" width="44" height="40" fill="#fff" stroke="#8a8a8a"/>
<path d="M11.5 0.5V40.5M33.5 0.5V40.5M0.5 8.5H44.5M0.5 16.5H44.5M0.5 24.5H44.5M0.5 32.5H44.5" stroke="#b0b0b0" fill="none"/>
<path d="M11 1H27V8H11ZM11 9H17V16H11ZM11 17H23V24H11ZM11 25H26V32H11ZM11 33H23V40H11Z" fill="#4a7ebb"/>
<path d="M28 4.5H32M28 12.5H32M28 20.5H32M28 28.5H32M28 36.5H32" stroke="#555" stroke-width="1"/></svg>
<div class="t" style="left:799.48px;top:329.79px;font-size:17.5px;color:#505050;font-weight:bold;transform:scaleX(1.0201);transform-origin:0 0;"><u>D</u>ata Bars</div>
<div class="arr" style="left:989px;top:326.7px"></div>
<svg class="a" style="left:743px;top:378px" width="48" height="46" viewBox="0 0 48 46">
<rect x="0.5" y="0.5" width="44" height="40" fill="#fff" stroke="#8a8a8a"/>
<path d="M11.5 0.5V40.5M33.5 0.5V40.5M0.5 8.5H44.5M0.5 16.5H44.5M0.5 24.5H44.5M0.5 32.5H44.5" stroke="#b0b0b0" fill="none"/>
<rect x="11" y="1" width="23" height="8" fill="#4a7ebb"/><rect x="11" y="9" width="23" height="8" fill="#76a797"/><rect x="11" y="17" width="23" height="8" fill="#f3d17c"/><rect x="11" y="25" width="23" height="8" fill="#ee9a3f"/><rect x="11" y="33" width="23" height="7" fill="#dc5b3c"/>
<path d="M22 4.5H31M22 12.5H31M22 20.5H31M22 28.5H31M22 36.5H31" stroke="#444" stroke-width="1"/></svg>
<div class="t" style="left:800.02px;top:395.59px;font-size:17.5px;color:#505050;font-weight:bold;transform:scaleX(0.9713);transform-origin:0 0;">Color <u>S</u>cales</div>
<div class="arr" style="left:989px;top:392.7px"></div>
<svg class="a" style="left:743px;top:444px" width="48" height="46" viewBox="0 0 48 46">
<rect x="0.5" y="0.5" width="44" height="40" fill="#fff" stroke="#8a8a8a"/>
<path d="M11.5 0.5V40.5M33.5 0.5V40.5M0.5 8.5H44.5M0.5 16.5H44.5M0.5 24.5H44.5M0.5 32.5H44.5" stroke="#b0b0b0" fill="none"/>
<circle cx="16" cy="5" r="2" fill="#5aa088"/><circle cx="16" cy="13" r="2" fill="#e27a24"/><circle cx="16" cy="21" r="2" fill="#5aa088"/><circle cx="16" cy="29" r="2" fill="#e27a24"/><circle cx="16" cy="37" r="2" fill="#5aa088"/>
<path d="M22 4.5H31M22 12.5H31M22 20.5H31M22 28.5H31M22 36.5H31" stroke="#666" stroke-width="1"/></svg>
<div class="t" style="left:800.1px;top:461.39px;font-size:17.5px;color:#505050;font-weight:bold;transform:scaleX(1);transform-origin:0 0;"><u>I</u>con Sets</div>
<div class="arr" style="left:989px;top:459px"></div>
<svg class="a" style="left:930px;top:432px" width="60" height="70" viewBox="-6 -4 60 70">
<defs><linearGradient id="tg" x1="0" y1="0" x2="0" y2="1"><stop offset="0" stop-color="#d3eeee"/><stop offset="0.3" stop-color="#8fcfcf"/><stop offset="0.62" stop-color="#3aa9a9"/><stop offset="1" stop-color="#0c9a9a"/></linearGradient>
<filter id="sh" x="-30%" y="-30%" width="160%" height="160%"><feGaussianBlur stdDeviation="1.6"/></filter></defs>
<path d="M24.5 5L36.5 34.5H44.5L25 59L4.5 34.5H13Z" fill="#777" opacity=".35" filter="url(#sh)"/>
<path d="M23.5 3L35.2 33.3H43.1L23.5 57.4L3.3 33.3H11.8Z" fill="url(#tg)"/></svg>
<div class="a" style="left:732px;top:499px;width:279px;height:38px;background:#c8c8c8;border:3px solid #0b4a50"></div>
<svg class="a" style="left:740px;top:505.5px" width="28" height="28" viewBox="0 0 28 28"><g transform="translate(0,0)"><rect x="0.5" y="0.5" width="20" height="21" fill="#fff" stroke="#8a8a8a"/>
<path d="M5.5 0.5V21.5M16 0.5V21.5M0.5 4.5H20.5M0.5 12.5H20.5M0.5 17H20.5" stroke="#b4b4b4" fill="none"/>
<rect x="5.5" y="5.3" width="10.5" height="6.5" fill="#f0c66e"/></g></svg>
<div class="t" style="left:779.2px;top:510.01px;font-size:17px;color:#2b2b2b;transform:scaleX(0.9965);transform-origin:0 0;"><u>N</u>ew Rule...</div>
<svg class="a" style="left:740px;top:542.5px" width="28" height="28" viewBox="0 0 28 28"><g transform="translate(0,0)"><rect x="0.5" y="0.5" width="20" height="21" fill="#fff" stroke="#8a8a8a"/>
<path d="M5.5 0.5V21.5M16 0.5V21.5M0.5 4.5H20.5M0.5 12.5H20.5M0.5 17H20.5" stroke="#b4b4b4" fill="none"/>
<rect x="5.5" y="5.3" width="10.5" height="6.5" fill="#f0c66e"/></g><path d="M10 17.5L21 9.5L26 15L15 23Z" fill="#fff"/><rect x="0" y="0" width="12.5" height="6" rx="1.5" fill="#e8788f" transform="translate(11.5,19.5) rotate(-33)"/></svg>
<div class="t" style="left:779.73px;top:547.41px;font-size:17px;color:#5a5a5a;transform:scaleX(0.9691);transform-origin:0 0;"><u>C</u>lear Rules</div>
<div class="arr" style="left:989px;top:549.3px"></div>
<svg class="a" style="left:740px;top:579.5px" width="28" height="28" viewBox="0 0 28 28"><path d="M0.5 20.5V0.5H20.5" stroke="#8a8a8a" fill="none"/><g transform="translate(2.3,2.7)"><rect x="0.5" y="0.5" width="20" height="21" fill="#fff" stroke="#8a8a8a"/>
<path d="M5.5 0.5V21.5M16 0.5V21.5M0.5 4.5H20.5M0.5 12.5H20.5M0.5 17H20.5" stroke="#b4b4b4" fill="none"/>
<rect x="5.5" y="5.3" width="10.5" height="6.5" fill="#f0c66e"/></g></svg>
<div class="t" style="left:780.1px;top:584.41px;font-size:17px;color:#5a5a5a;transform:scaleX(0.9967);transform-origin:0 0;">Manage <u>R</u>ules...</div>
</div>
</body>
</html>
